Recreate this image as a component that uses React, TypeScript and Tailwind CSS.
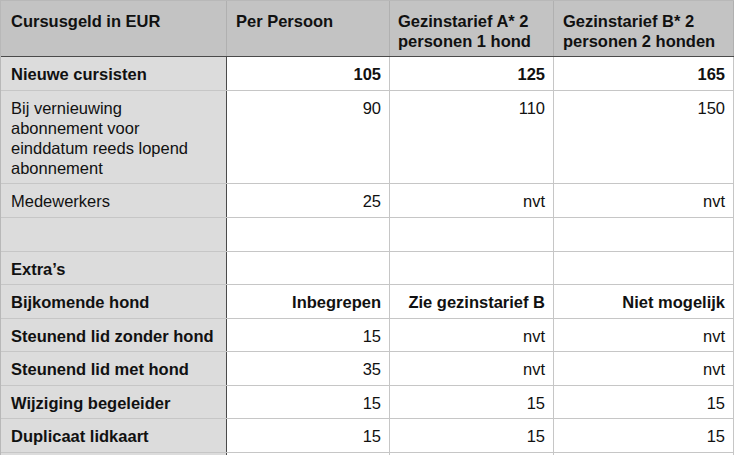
import React from "react";

type Cell = { t: string; b?: boolean };
type Row = { h: string; label: Cell; vals: Cell[] };

const rows: Row[] = [
  { h: "h-[34px]", label: { t: "Nieuwe cursisten", b: true }, vals: [{ t: "105", b: true }, { t: "125", b: true }, { t: "165", b: true }] },
  {
    h: "h-[93px]",
    label: { t: "Bij vernieuwing abonnement voor einddatum reeds lopend abonnement" },
    vals: [{ t: "90" }, { t: "110" }, { t: "150" }],
  },
  { h: "h-[34px]", label: { t: "Medewerkers" }, vals: [{ t: "25" }, { t: "nvt" }, { t: "nvt" }] },
  { h: "h-[34px]", label: { t: "" }, vals: [{ t: "" }, { t: "" }, { t: "" }] },
  { h: "h-[33px]", label: { t: "Extra’s", b: true }, vals: [{ t: "" }, { t: "" }, { t: "" }] },
  { h: "h-[34px]", label: { t: "Bijkomende hond", b: true }, vals: [{ t: "Inbegrepen", b: true }, { t: "Zie gezinstarief B", b: true }, { t: "Niet mogelijk", b: true }] },
  { h: "h-[33px]", label: { t: "Steunend lid zonder hond", b: true }, vals: [{ t: "15" }, { t: "nvt" }, { t: "nvt" }] },
  { h: "h-[34px]", label: { t: "Steunend lid met hond", b: true }, vals: [{ t: "35" }, { t: "nvt" }, { t: "nvt" }] },
  { h: "h-[33px]", label: { t: "Wijziging begeleider", b: true }, vals: [{ t: "15" }, { t: "15" }, { t: "15" }] },
  { h: "h-[34px]", label: { t: "Duplicaat lidkaart", b: true }, vals: [{ t: "15" }, { t: "15" }, { t: "15" }] },
  { h: "h-[34px]", label: { t: "" }, vals: [{ t: "" }, { t: "" }, { t: "" }] },
];

const widths = ["w-[163px]", "w-[164px]", "w-[180px]"];

export default function App() {
  return (
    <div
      className="w-[735px] h-[455px] overflow-hidden bg-white text-[16.5px] leading-[20px] text-[#111]"
      style={{ fontFamily: '"Liberation Sans", Arial, Helvetica, sans-serif' }}
    >
      <div className="flex flex-col w-[734px] border-t border-l border-[#b8b8b8]">
        <div className="flex h-[56px] border-b border-[#4a4a4a] bg-[#c3c3c3] font-bold">
          <div className="w-[226px] shrink-0 border-r border-[#b0b0b0] pl-[10px] pt-[10px]">Cursusgeld in EUR</div>
          <div className="w-[163px] shrink-0 border-r border-[#b0b0b0] pl-[9px] pt-[10px]">Per Persoon</div>
          <div className="w-[164px] shrink-0 border-r border-[#b0b0b0] pl-[8px] pt-[10px]">
            Gezinstarief A* 2<br />personen 1 hond
          </div>
          <div className="w-[180px] shrink-0 border-r border-[#b0b0b0] pl-[9px] pt-[10px]">
            Gezinstarief B* 2<br />personen 2 honden
          </div>
        </div>
        {rows.map((r, i) => (
          <div key={i} className={`flex shrink-0 ${r.h} border-b border-[#c6c6c6]`}>
            <div
              className={`w-[226px] shrink-0 bg-[#dcdcdc] border-r border-[#4a4a4a] pl-[10px] pt-[7px] ${
                r.label.b ? "font-bold whitespace-nowrap pr-[4px]" : "pr-[14px]"
              }`}
            >
              {r.label.t}
            </div>
            {r.vals.map((v, j) => (
              <div
                key={j}
                className={`${widths[j]} shrink-0 border-r border-[#c6c6c6] pr-[8px] pt-[7px] text-right ${
                  v.b ? "font-bold" : ""
                }`}
              >
                {v.t}
              </div>
            ))}
          </div>
        ))}
      </div>
    </div>
  );
}
